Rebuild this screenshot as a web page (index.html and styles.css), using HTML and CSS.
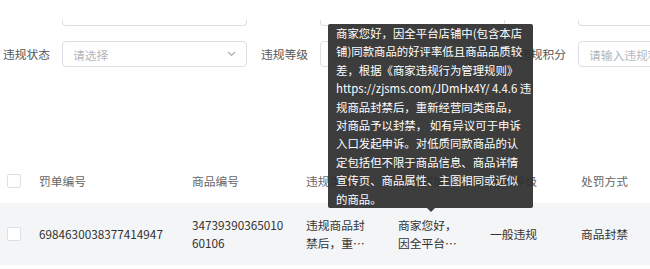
FILE: index.html
```html
<!DOCTYPE html>
<html lang="zh-CN">
<head>
<meta charset="utf-8">
<link rel="stylesheet" href="styles.css">
</head>
<body>
<div class="page">
  <div class="form-row stub-row">
    <div class="item"><span class="label"></span><div class="stub"></div></div>
    <div class="item"><span class="label"></span><div class="stub"></div></div>
    <div class="item"><span class="label"></span><div class="stub"></div></div>
  </div>
  <div class="form-row">
    <div class="item"><span class="label">违规状态</span>
      <div class="field"><span class="ph">请选择</span>
        <svg class="chev" width="9" height="6" viewBox="0 0 9 6"><path d="M1 1l3.5 3.5L8 1" fill="none" stroke="#a8abb2" stroke-width="1.1"/></svg>
      </div>
    </div>
    <div class="item"><span class="label">违规等级</span>
      <div class="field"><span class="ph">请选择</span>
        <svg class="chev" width="9" height="6" viewBox="0 0 9 6"><path d="M1 1l3.5 3.5L8 1" fill="none" stroke="#a8abb2" stroke-width="1.1"/></svg>
      </div>
    </div>
    <div class="item"><span class="label">违规积分</span>
      <div class="field"><span class="ph">请输入违规积分</span></div>
    </div>
  </div>

  <div class="table">
    <div class="tr th">
      <div class="td"><span class="cb"></span></div>
      <div class="td">罚单编号</div>
      <div class="td">商品编号</div>
      <div class="td">违规类型</div>
      <div class="td">违规详情</div>
      <div class="td">违规等级</div>
      <div class="td">处罚方式</div>
    </div>
    <div class="tr tb">
      <div class="td"><span class="cb"></span></div>
      <div class="td">6984630038377414947</div>
      <div class="td num">3473939036501060106</div>
      <div class="td"><span class="clamp w64">违规商品封禁后，重新经营同类商品</span></div>
      <div class="td"><span class="clamp w64">商家您好，因全平台店铺中(包含本店铺)同款商品</span></div>
      <div class="td">一般违规</div>
      <div class="td">商品封禁</div>
    </div>
  </div>

  <div class="tooltip">商家您好，因全平台店铺中(包含本店<br>铺)同款商品的好评率低且商品品质较<br>差，根据《商家违规行为管理规则》<br>https://zjsms.com/JDmHx4Y/ 4.4.6 违<br>规商品封禁后，重新经营同类商品，<br>对商品予以封禁， 如有异议可于申诉<br>入口发起申诉。对低质同款商品的认<br>定包括但不限于商品信息、商品详情<br>宣传页、商品属性、主图相同或近似<br>的商品。<span class="arrow"></span></div>
</div>
</body>
</html>
```

FILE: styles.css
```css
* { box-sizing: border-box; }
html, body { margin: 0; padding: 0; background: #fff; }
body {
  font-family: "Noto Sans CJK SC", "Noto Sans", sans-serif;
  font-size: 11.75px;
  color: #333;
  width: 650px;
  height: 269px;
  overflow: hidden;
}
.page {
  position: relative;
  width: 650px;
  height: 269px;
  padding-top: 20px;
  overflow: hidden;
}

.form-row {
  display: flex;
  gap: 14px;
  padding-left: 3px;
  margin-top: 15px;
  white-space: nowrap;
}
.stub-row { margin-top: 0; }
.item { display: flex; align-items: center; gap: 12px; flex: none; }
.label { width: 47px; color: #555; line-height: 26px; }
.stub-row .label { line-height: 6px; }
.stub {
  width: 185px;
  height: 6px;
  border: 1px solid #dcdfe6;
  border-top: none;
  border-radius: 0 0 4px 4px;
}
.field {
  width: 185px;
  height: 26px;
  border: 1px solid #dcdfe6;
  border-radius: 4px;
  display: flex;
  align-items: center;
  justify-content: space-between;
  padding: 0 10px 0 10px;
  overflow: hidden;
}
.ph { color: #b4b7bd; }
.chev { flex: none; }

.table { margin-top: 92px; }
.tr {
  display: grid;
  grid-template-columns: 39px 153px 114px 92px 92px 91px 69px;
  align-items: center;
}
.th { height: 44px; color: #666; }
.tb { height: 62px; background: #f4f5f7; color: #333; }
.td { line-height: 18px; }
.td:first-child { padding-left: 7px; display: flex; align-items: center; }
.cb {
  display: block;
  width: 14px;
  height: 14px;
  background: #fff;
  border: 1px solid #dcdfe6;
  border-radius: 2px;
}
.num { width: 92px; word-break: break-all; }
.clamp {
  display: -webkit-box;
  -webkit-box-orient: vertical;
  -webkit-line-clamp: 2;
  overflow: hidden;
}
.w64 { width: 64px; }

.tooltip {
  position: absolute;
  left: 328px;
  top: 24px;
  width: 205px;
  height: 184px;
  padding: 0 0 0 8px;
  background: rgba(44, 44, 44, 0.92);
  color: #fff;
  font-size: 11.4px;
  line-height: 18.4px;
  white-space: nowrap;
  border-radius: 2px;
}
.arrow {
  position: absolute;
  left: 99px;
  bottom: -4px;
  width: 0;
  height: 0;
  border-left: 4px solid transparent;
  border-right: 4px solid transparent;
  border-top: 4px solid rgba(44, 44, 44, 0.92);
}
```
